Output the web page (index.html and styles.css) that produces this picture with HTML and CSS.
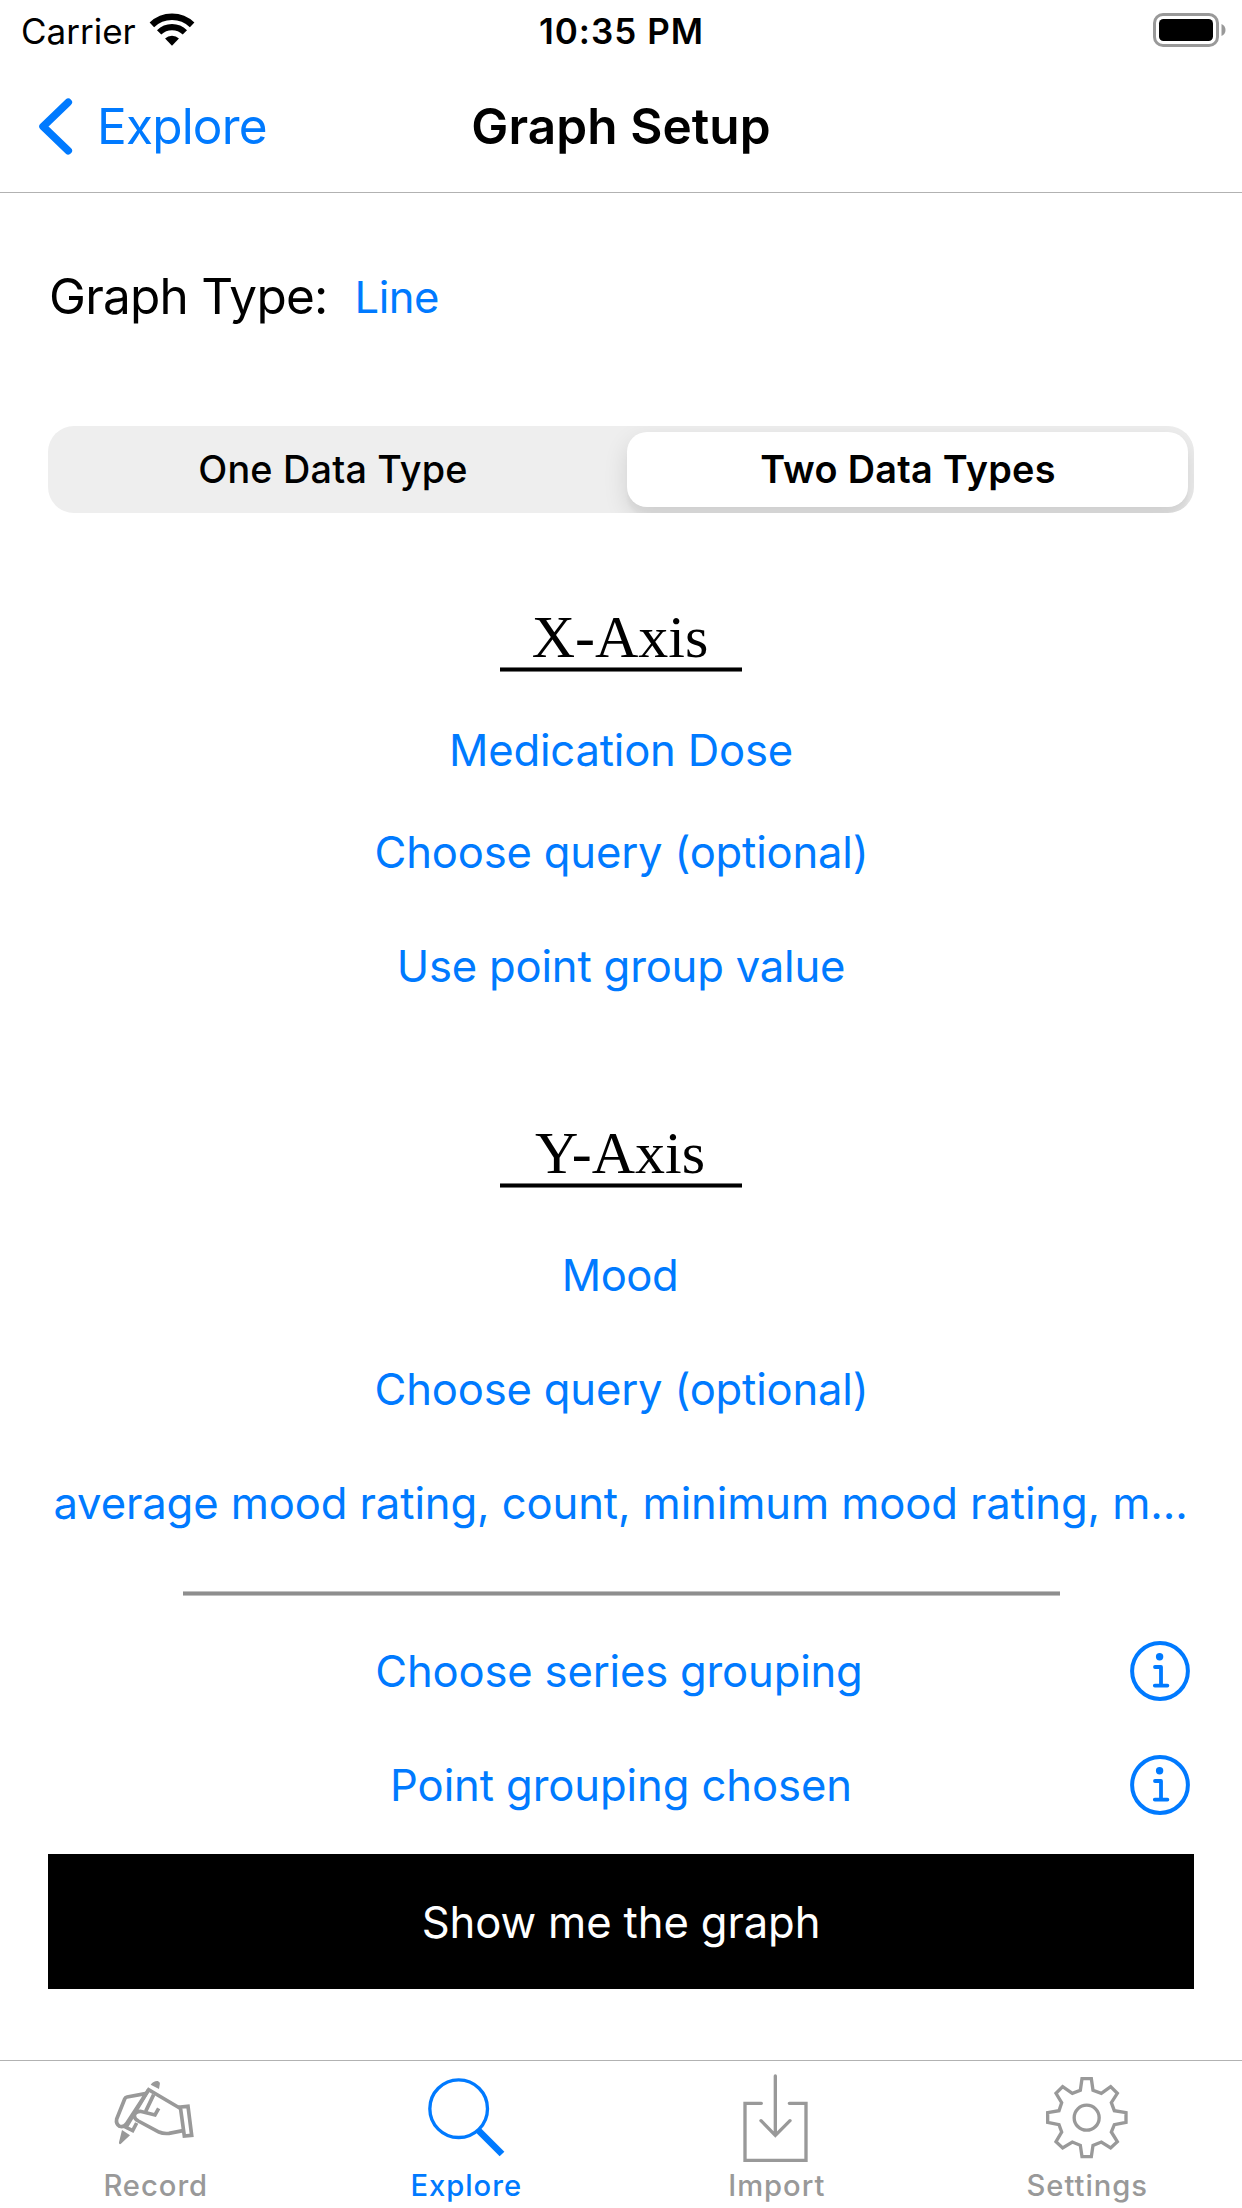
FILE: index.html
```html
<!DOCTYPE html>
<html lang="en">
<head>
<meta charset="utf-8">
<title>Graph Setup</title>
<link rel="stylesheet" href="styles.css">
</head>
<body>
<div class="screen">
  <div class="status">
    <div class="status-left">
      <span class="carrier">Carrier</span>
      <svg class="wifi" viewBox="447 36 138 102" aria-hidden="true">
        <path d="M455.6 74.4A87 87 0 0 1 576.4 74.4" fill="none" stroke="#000" stroke-width="19.5"/>
        <path d="M477.4 97.1A55.5 55.5 0 0 1 554.6 97.1" fill="none" stroke="#000" stroke-width="18.5"/>
        <path d="M516 137L495.2 115.4A30 30 0 0 1 536.8 115.4Z"/>
      </svg>
    </div>
    <span class="time">10:35 PM</span>
    <svg class="battery" viewBox="0 0 74 34" aria-hidden="true">
      <rect x="1.5" y="1.5" width="63" height="31" rx="8.5" fill="none" stroke="#999" stroke-width="3"/>
      <rect x="6" y="6" width="54" height="22" rx="4.5"/>
      <path d="M68.5 11C71 12 72.5 14 72.5 17S71 22 68.5 23Z" fill="#999"/>
    </svg>
  </div>

  <header class="nav">
    <a class="back">
      <svg class="chevron" viewBox="114 291 105 172" aria-hidden="true"><path d="M205 304L129 377L205 450" fill="none" stroke="currentColor" stroke-width="23" stroke-linecap="round" stroke-linejoin="round"/></svg>
      <span>Explore</span>
    </a>
    <h1 class="title">Graph Setup</h1>
  </header>

  <main class="content">
    <div class="graph-type">
      <span class="graph-type-label">Graph Type:</span>
      <a class="graph-type-value">Line</a>
    </div>

    <div class="segmented">
      <span class="segment">One Data Type</span>
      <span class="segment selected">Two Data Types</span>
    </div>

    <section class="axis axis-x">
      <h2 class="axis-title">X-Axis</h2>
      <a class="row">Medication Dose</a>
      <a class="row query">Choose query (optional)</a>
      <a class="row spaced">Use point group value</a>
    </section>

    <section class="axis axis-y">
      <h2 class="axis-title">Y-Axis</h2>
      <a class="row mood">Mood</a>
      <a class="row query spaced">Choose query (optional)</a>
      <a class="row spaced summary">average mood rating, count, minimum mood rating, m...</a>
    </section>

    <hr class="rule">

    <section class="grouping">
      <div class="row series">
        <a>Choose series grouping</a>
        <svg class="info" viewBox="0 0 60 60" aria-hidden="true">
          <circle cx="30" cy="30" r="27.9" fill="none" stroke="currentColor" stroke-width="4"/>
          <circle cx="29.6" cy="15.7" r="3.7" fill="currentColor"/>
          <path d="M25 26H31V44.6M24.8 44.6H37.4" fill="none" stroke="currentColor" stroke-width="3.8" stroke-linecap="round" stroke-linejoin="round"/>
        </svg>
      </div>
      <div class="row points">
        <a>Point grouping chosen</a>
        <svg class="info" viewBox="0 0 60 60" aria-hidden="true">
          <circle cx="30" cy="30" r="27.9" fill="none" stroke="currentColor" stroke-width="4"/>
          <circle cx="29.6" cy="15.7" r="3.7" fill="currentColor"/>
          <path d="M25 26H31V44.6M24.8 44.6H37.4" fill="none" stroke="currentColor" stroke-width="3.8" stroke-linecap="round" stroke-linejoin="round"/>
        </svg>
      </div>
    </section>

    <button class="submit">Show me the graph</button>
  </main>

  <nav class="tabs">
    <a class="tab">
      <svg class="tab-icon" viewBox="-14 33 480 321" aria-hidden="true">
        <g fill="none" stroke="currentColor" stroke-width="11">
          <path d="M201 130L142 141Q137 142 135 147L111 207Q108 222 120 229Q132 232 140 222L207 119L305 177"/>
          <path d="M207 119L139 232L159 242L171 219M222 134L198 184"/>
          <path d="M237 175L226 195L182 184Q166 184 164 197Q164 206 176 213L238 246Q251 252 268 250L310 242"/>
          <path d="M302 171L325 169L336 256L314 258Z"/>
        </g>
        <path d="M213 104Q222 92 234 93Q243 96 240 105L238 117ZM127 240L151 256L123 282Q117 284 118 277Z" fill="currentColor"/>
      </svg>
      <span class="tab-label">Record</span>
    </a>
    <a class="tab active">
      <svg class="tab-icon" viewBox="-12 33 480 321" aria-hidden="true">
        <circle cx="206" cy="176" r="86.5" fill="none" stroke="currentColor" stroke-width="10"/>
        <path d="M264 240L336 312" stroke="currentColor" stroke-width="20"/>
      </svg>
      <span class="tab-label">Explore</span>
    </a>
    <a class="tab">
      <svg class="tab-icon" viewBox="-11 33 480 321" aria-hidden="true">
        <g fill="none" stroke="currentColor" stroke-width="10" stroke-linecap="round">
          <path d="M185 160H136V331H319V160H269"/>
          <path d="M227 78V256M184 212L227 256L271 212"/>
        </g>
      </svg>
      <span class="tab-label">Import</span>
    </a>
    <a class="tab">
      <svg class="tab-icon" viewBox="-9 33 480 321" aria-hidden="true">
        <g fill="none" stroke="currentColor" stroke-width="10">
          <circle cx="230" cy="203" r="37.5"/>
          <path d="M216 86H244L249 121L274 130L302 110L322 130L304 158L313 182L348 188V217L313 224L304 246L322 275L302 294L274 276L249 286L244 320H216L211 286L187 276L158 294L138 275L155 246L147 224L113 217V188L147 182L155 158L138 130L158 110L187 130L211 121Z"/>
        </g>
      </svg>
      <span class="tab-label">Settings</span>
    </a>
  </nav>
</div>
</body>
</html>
```
FILE: styles.css
```css
* {
  box-sizing: border-box;
}

body {
  margin: 0;
  background: #fff;
  color: #000;
  font-family: Inter, "Liberation Sans", sans-serif;
}

.screen {
  display: flex;
  flex-direction: column;
  width: 1242px;
  height: 2208px;
}

svg {
  display: block;
  flex: none;
}

/* Status bar */
.status {
  display: grid;
  grid-template-columns: 1fr auto 1fr;
  align-items: center;
  height: 63px;
  padding: 0 15px 0 21px;
  font-size: 35px;
}

.status-left {
  display: flex;
  align-items: center;
  gap: 13px;
}

.carrier {
  padding-bottom: 2px;
}

.wifi {
  width: 46px;
  height: 34px;
  margin-bottom: 5px;
}

.time {
  margin-left: -5px;
  padding-bottom: 2px;
  font-weight: 600;
  letter-spacing: 1px;
}

.battery {
  justify-self: end;
  width: 74px;
  height: 34px;
  margin-bottom: 3px;
}

/* Navigation bar */
.nav {
  display: grid;
  grid-template-columns: 1fr auto 1fr;
  align-items: center;
  height: 130px;
  padding: 0 38px 3px;
  border-bottom: 1px solid #b2b2b2;
  font-size: 49.5px;
}

.back {
  display: flex;
  align-items: center;
  gap: 24px;
  color: #007aff;
  letter-spacing: -0.8px;
}

.chevron {
  width: 35px;
  height: 57px;
}

.title {
  margin: 0;
  font-size: 49.5px;
  font-weight: 600;
  letter-spacing: 0.09px;
}

/* Form */
.content {
  display: flex;
  flex-direction: column;
  flex: 1;
  padding: 63px 48px 0;
}

.graph-type {
  display: flex;
  align-items: center;
  gap: 27px;
  height: 80px;
  padding-left: 1px;
}

.graph-type-label {
  font-size: 49.5px;
  letter-spacing: -0.77px;
}

.graph-type-value {
  padding-top: 2px;
  color: #007aff;
  font-size: 43.6px;
  letter-spacing: -0.49px;
}

.segmented {
  display: grid;
  grid-template-columns: 579px 561px;
  height: 87px;
  margin-top: 90px;
  padding: 6px 6px 6px 0;
  overflow: hidden;
  border-radius: 26px;
  background: #eee;
}

.segment {
  display: flex;
  align-items: center;
  justify-content: center;
  padding: 0 9px 2px 0;
  font-size: 37.8px;
  font-weight: 500;
  letter-spacing: 0.2px;
}

.segment.selected {
  padding: 0 0 2px 1px;
  border-radius: 20px;
  background: #fff;
  box-shadow: 0 9px 24px rgba(0, 0, 0, 0.12), 0 9px 3px rgba(0, 0, 0, 0.03);
  font-weight: 600;
  letter-spacing: 0.29px;
}

.axis {
  display: flex;
  flex-direction: column;
}

.axis-x {
  margin-top: 89px;
}

.axis-y {
  margin-top: 104px;
}

.axis-title {
  align-self: center;
  width: 242px;
  height: 70px;
  margin: 0 0 30px;
  padding-right: 2px;
  background: linear-gradient(#777 1px, #000 1px, #000 4px, #777 4px) no-repeat 0 100% / 100% 5px;
  font: 400 60px/70px "Liberation Serif", serif;
  text-align: center;
}

.axis-y .axis-title {
  margin-bottom: 39px;
}

.row {
  display: grid;
  align-items: center;
  justify-items: center;
  height: 96px;
  color: #007aff;
  font-size: 43.6px;
  letter-spacing: -0.19px;
  white-space: nowrap;
}

.axis-x .row + .row {
  margin-top: 6px;
}

.row.spaced,
.axis-x .row.spaced {
  margin-top: 18px;
}

.row.query {
  padding-left: 1px;
}

.row.mood {
  padding-right: 2px;
  letter-spacing: -0.5px;
}

.row.summary {
  padding-right: 1px;
  letter-spacing: -0.11px;
}

.rule {
  width: 877px;
  height: 5px;
  margin: 40px auto 27px;
  border: 0;
  background: linear-gradient(#c0c0c0 1px, #8e8e8e 1px, #8e8e8e 4px, #c0c0c0 4px);
}

.grouping {
  display: grid;
  gap: 18px;
}

.grouping .row > * {
  grid-area: 1 / 1;
}

.series a {
  margin-right: 4px;
}

.points {
  letter-spacing: -0.1px;
}

.info {
  justify-self: end;
  width: 60px;
  height: 60px;
  margin-right: 4px;
}

.submit {
  height: 135px;
  margin-top: 21px;
  padding: 2px 0 0;
  border: 0;
  background: #000;
  color: #fff;
  font: 400 43.6px Inter, "Liberation Sans", sans-serif;
  letter-spacing: -0.12px;
}

/* Tab bar */
.tabs {
  display: grid;
  grid-template-columns: repeat(4, 1fr);
  height: 148px;
  border-top: 1px solid #b2b2b2;
}

.tab {
  display: flex;
  flex-direction: column;
  align-items: center;
  color: #999;
}

.tab.active {
  color: #007aff;
}

.tab-icon {
  width: 160px;
  height: 107px;
}

.tab-label {
  padding: 1px 0 0 1px;
  font-size: 29.2px;
  font-weight: 500;
  line-height: 34px;
  letter-spacing: 0.97px;
}
```
